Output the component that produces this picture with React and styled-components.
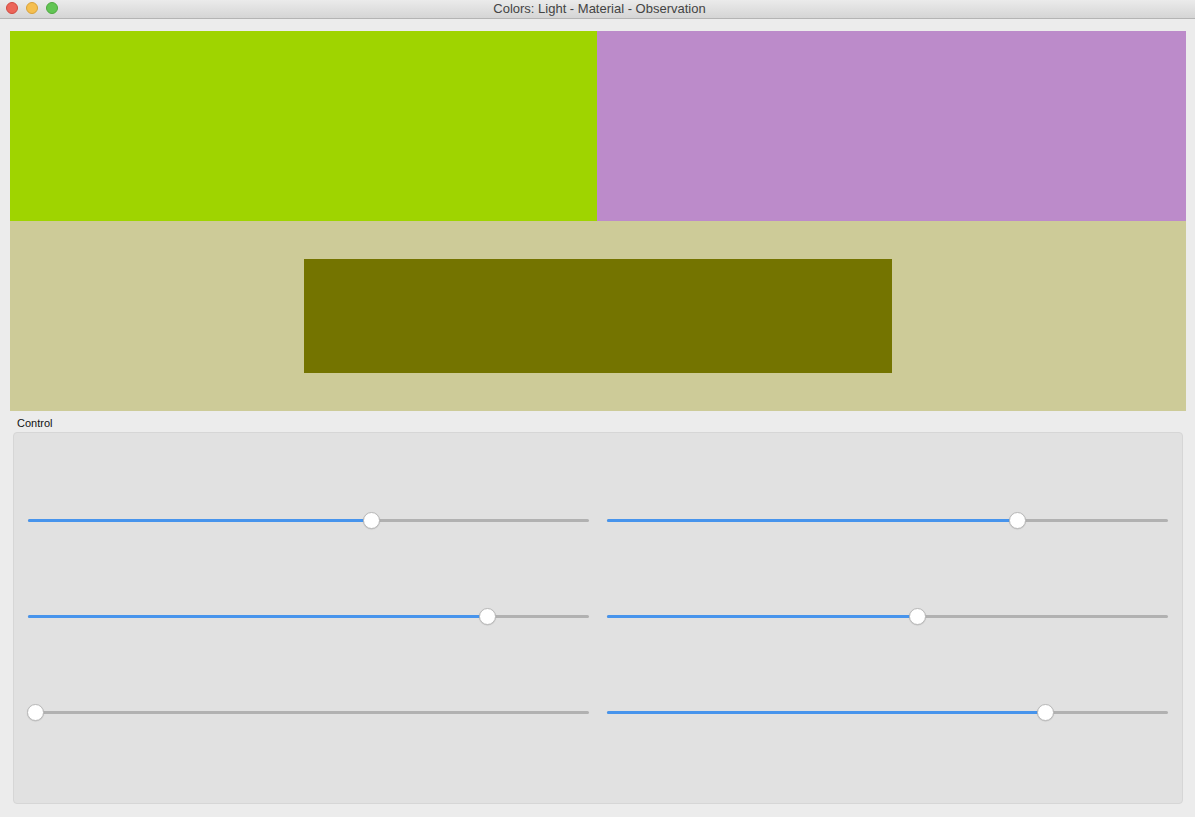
import React from "react";
import styled, { createGlobalStyle } from "styled-components";

const Global = createGlobalStyle`
  html, body { margin: 0; padding: 0; background: #ececec; }
  body { font-family: "Liberation Sans", Arial, sans-serif; }
`;

const Window = styled.div`
  width: 1195px;
  height: 817px;
  display: flex;
  flex-direction: column;
  background: #ececec;
  overflow: hidden;
`;

const TitleBar = styled.div`
  height: 18px;
  border-bottom: 1px solid #b4b4b4;
  background: linear-gradient(#ebebeb, #d5d5d5);
  position: relative;
  display: flex;
  align-items: center;
  justify-content: center;
  flex-shrink: 0;
`;

const Lights = styled.div`
  position: absolute;
  left: 6px;
  top: 2px;
  display: flex;
  gap: 8px;
`;

const Light = styled.span`
  width: 12px;
  height: 12px;
  border-radius: 50%;
  box-sizing: border-box;
  background: ${(p) => p.$bg};
  border: 1px solid ${(p) => p.$bd};
`;

const Title = styled.div`
  font-size: 13px;
  color: #444;
  line-height: 18px;
  padding-left: 4px;
`;

const Body = styled.div`
  flex: 1;
  display: flex;
  flex-direction: column;
  padding: 12px 9px 13px 10px;
`;

const Canvas = styled.div`
  height: 380px;
  display: grid;
  grid-template-rows: 190px 190px;
`;

const TopRow = styled.div`
  display: grid;
  grid-template-columns: 587px 1fr;
`;

const Swatch = styled.div`
  background: ${(p) => p.$c};
`;

const Bottom = styled.div`
  background: #cdcb98;
  display: flex;
  align-items: center;
  justify-content: center;
`;

const Inner = styled.div`
  width: 588px;
  height: 114px;
  background: #747400;
`;

const GroupLabel = styled.div`
  font-size: 11px;
  color: #111;
  margin: 6px 0 2px 7px;
  line-height: 13px;
`;

const Group = styled.div`
  flex: 1;
  margin: 0 3px 0 3px;
  background: #e1e1e1;
  border: 1px solid #d6d6d6;
  border-radius: 4px;
  box-sizing: border-box;
  padding: 39px 14px 43px 14px;
  display: grid;
  grid-template-columns: 1fr 1fr;
  grid-template-rows: repeat(3, 96px);
  column-gap: 18px;
`;

const Cell = styled.div`
  display: flex;
  align-items: center;
`;

const SliderBox = styled.div`
  position: relative;
  width: 100%;
  height: 18px;
  display: flex;
  align-items: center;
`;

const Track = styled.div`
  width: 100%;
  height: 3px;
  background: #b1b1b1;
  border-radius: 1.5px;
  display: flex;
`;

const Fill = styled.div`
  height: 100%;
  background: #4794ec;
  border-radius: 1.5px;
`;

const Handle = styled.div`
  position: absolute;
  top: 0.5px;
  width: 17px;
  height: 17px;
  margin-left: -8.5px;
  border-radius: 50%;
  background: #fff;
  box-sizing: border-box;
  border: 1px solid #b9b9b9;
  box-shadow: 0 0.5px 1px rgba(0,0,0,0.15);
`;

function Slider({ value }) {
  const pos = `calc(7px + (100% - 14px) * ${value})`;
  return (
    <SliderBox>
      <Track>
        <Fill style={{ width: value > 0 ? pos : 0 }} />
      </Track>
      <Handle style={{ left: pos }} />
    </SliderBox>
  );
}

const values = [0.616, 0.737, 0.828, 0.554, 0, 0.788];

export default function App() {
  return (
    <>
      <Global />
      <Window>
        <TitleBar>
          <Lights>
            <Light $bg="#ec6559" $bd="#d1493f" />
            <Light $bg="#f5bf4f" $bd="#d8a23a" />
            <Light $bg="#62c554" $bd="#4ea93f" />
          </Lights>
          <Title>Colors: Light - Material - Observation</Title>
        </TitleBar>
        <Body>
          <Canvas>
            <TopRow>
              <Swatch $c="#9fd400" />
              <Swatch $c="#bc8bca" />
            </TopRow>
            <Bottom>
              <Inner />
            </Bottom>
          </Canvas>
          <GroupLabel>Control</GroupLabel>
          <Group>
            {values.map((v, i) => (
              <Cell key={i}>
                <Slider value={v} />
              </Cell>
            ))}
          </Group>
        </Body>
      </Window>
    </>
  );
}
